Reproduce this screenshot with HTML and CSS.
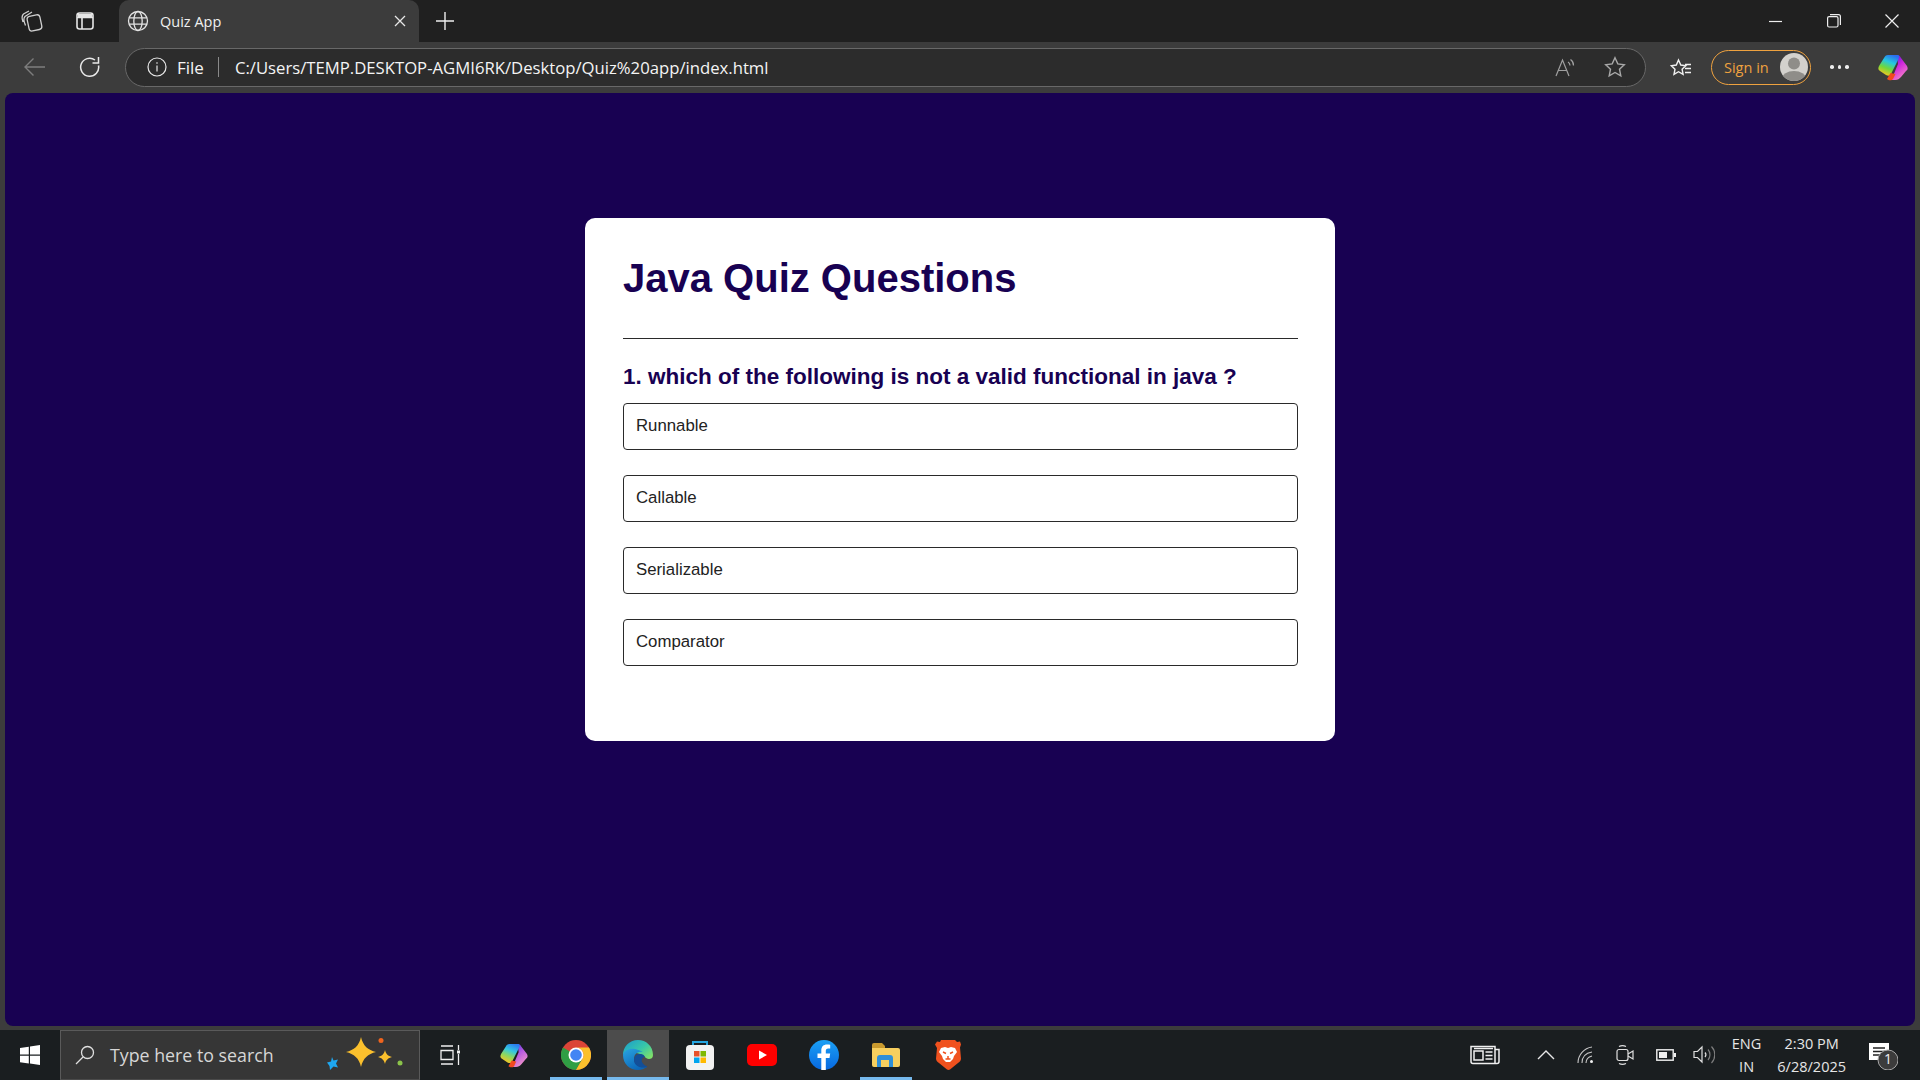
FILE: index.html
```html
<!DOCTYPE html>
<html lang="en">
<head>
<meta charset="utf-8">
<title>Quiz App</title>
<link rel="stylesheet" href="styles.css">
</head>
<body>
<div class="screen">
  <header class="tabstrip">
    <div class="strip-btn first"><svg width="24" height="24" viewBox="0 0 24 24" fill="none" stroke="#cfcfcf" stroke-width="1.3"><rect x="8" y="6.5" width="13" height="15" rx="3" transform="rotate(-12 14 14)"/><path d="M5.5 16.500C3.500 12 3.500 9 5 7.500L12 3M3 13C1.500 9 2 6.500 3.500 5L9 2"/></svg></div>
    <div class="strip-btn second"><svg width="20" height="20" viewBox="0 0 20 20" fill="none" stroke="#e6e6e6" stroke-width="1.6"><rect x="2" y="2" width="16" height="16" rx="2.5"/><path d="M2 6.5h16M7 6.5V18" /><path d="M3 3h14v3H3z" fill="#e6e6e6" stroke="none"/></svg></div>
    <div class="tab">
      <svg class="tab-globe" width="22" height="22" viewBox="0 0 22 22" fill="none" stroke="#e4e4e4" stroke-width="1.3"><circle cx="11" cy="11" r="9.5"/><ellipse cx="11" cy="11" rx="4.2" ry="9.5"/><path d="M2 7.8h18M2 14.2h18"/></svg>
      <span class="tab-title">Quiz App</span>
      <svg class="tab-close" width="12" height="12" viewBox="0 0 12 12" stroke="#e8e8e8" stroke-width="1.3"><path d="M1 1l10 10M11 1L1 11"/></svg>
    </div>
    <svg class="new-tab" width="18" height="18" viewBox="0 0 18 18" stroke="#eee" stroke-width="1.4"><path d="M9 0v18M0 9h18"/></svg>
    <div class="window-controls">
      <svg width="14" height="14" viewBox="0 0 14 14" stroke="#eee" stroke-width="1.2"><path d="M0 7.500h13"/></svg>
      <svg width="14" height="14" viewBox="0 0 14 14" fill="none" stroke="#eee" stroke-width="1.2"><rect x=".6" y="2.6" width="10.4" height="10.4" rx="1.5"/><path d="M3 .6h8.500a1.900 1.900 0 0 1 1.900 1.900V11"/></svg>
      <svg width="14" height="14" viewBox="0 0 14 14" stroke="#eee" stroke-width="1.2"><path d="M.5.5l13 13M13.500.5l-13 13"/></svg>
    </div>
  </header>

  <nav class="toolbar">
    <svg class="back" width="22" height="20" viewBox="0 0 22 20" fill="none" stroke="#7d7d7d" stroke-width="1.4"><path d="M21 10H1M9.500 1.500L1 10l8.500 8.500"/></svg>
    <svg class="reload" width="22" height="22" viewBox="0 0 22 22" fill="none" stroke="#e8e8e8" stroke-width="1.5"><path d="M19.500 9.500A9 9 0 1 1 16 4"/><path d="M19.500 1v6h-6"/></svg>
    <div class="address">
      <svg class="info" width="20" height="20" viewBox="0 0 20 20" fill="none" stroke="#e8e8e8" stroke-width="1.2"><circle cx="10" cy="10" r="9"/><path d="M10 8.500v6M10 5.200v1.600"/></svg>
      <span class="file">File</span>
      <span class="sep"></span>
      <span class="url">C:/Users/TEMP.DESKTOP-AGMI6RK/Desktop/Quiz%20app/index.html</span>
      <svg class="read" width="20" height="20" viewBox="0 0 20 20" fill="none" stroke="#a0a0a0" stroke-width="1.2"><path d="M1 19L7.500 3 14 19M3.500 13.500h8M13 5a4 4 0 0 1 2 3.500M15.500 2.500a7 7 0 0 1 3 6"/></svg>
      <svg class="fav" width="22" height="22" viewBox="0 0 22 22" fill="none" stroke="#a8a8a8" stroke-width="1.4"><path d="M11 1.800l2.800 6.100 6.500.8-4.800 4.500 1.300 6.600L11 16.500l-5.800 3.300 1.300-6.600L1.700 8.700l6.500-.8z"/></svg>
    </div>
    <svg class="favs" width="22" height="22" viewBox="0 0 22 22" fill="none" stroke="#f0f0f0" stroke-width="1.4"><path d="M8.500 2l2.300 5 5 .7-3.700 3.500 1 5.200-4.600-2.700-4.500 2.700 1-5.200L1.300 7.700l5-.7z" transform="translate(0 2)"/><path d="M15 8.500H21M15 12.500H21M15 16.500H21"/></svg>
    <div class="signin">
      <span>Sign in</span>
      <svg width="28" height="28" viewBox="0 0 28 28"><defs><clipPath id="av"><circle cx="14" cy="14" r="14"/></clipPath></defs><circle cx="14" cy="14" r="14" fill="#d3d1cd"/><g clip-path="url(#av)" fill="#8f8d89"><circle cx="14" cy="10.500" r="6"/><ellipse cx="14" cy="26" rx="12" ry="8"/></g></svg>
    </div>
    <div class="dots"><i></i><i></i><i></i></div>
    <svg class="copilot" width="30" height="27" viewBox="0 0 30 27">
      <defs>
        <linearGradient id="cp1" x1=".7" y1="0" x2=".3" y2="1"><stop offset="0" stop-color="#2b6df0"/><stop offset=".35" stop-color="#25c8e0"/><stop offset=".65" stop-color="#6fd83c"/><stop offset="1" stop-color="#ffc21e"/></linearGradient>
        <linearGradient id="cp2" x1=".2" y1="0" x2=".8" y2="1"><stop offset="0" stop-color="#4a14e0"/><stop offset=".45" stop-color="#d026dc"/><stop offset="1" stop-color="#fb8fc4"/></linearGradient>
      </defs>
      <path d="M19 1c2 0 3 1 4 3l6 8c1 2 1 4-1 5l-5 6c-2 2-3 3-6 3h-6c2-1 3-2 4-4l5-12z" fill="url(#cp2)"/>
      <path d="M10 1h9c2.500 0 2.500 2 1.500 4L13 20c-1 2-3 2-5 1l-6-4c-2-1-2-3-1-5L6 4c1-2 2-3 4-3z" fill="url(#cp1)"/>
      <path d="M12.500 19l5 1-2.500 5c-1 1.500-3 1.500-4.500 1L9 25z" fill="#f2491f"/>
    </svg>
  </nav>

  <main class="viewport">
    <section class="card">
      <h1 class="quiz-title">Java Quiz Questions</h1>
      <hr class="rule">
      <h2 class="question">1. which of the following is not a valid functional in java ?</h2>
      <ul class="options">
        <li class="option">Runnable</li>
        <li class="option">Callable</li>
        <li class="option">Serializable</li>
        <li class="option">Comparator</li>
      </ul>
    </section>
  </main>

  <footer class="taskbar">
    <div class="start"><svg width="20" height="20" viewBox="0 0 20 20" fill="#fff"><path d="M0 3l8.800-1.300v7.800H0zM10 1.500L20 0v9.500H10zM0 10.700h8.800v7.800L0 17.200zM10 10.700h10V20l-10-1.500z"/></svg></div>
    <div class="search">
      <svg class="search-icon" width="20" height="20" viewBox="0 0 20 20" fill="none" stroke="#e0e0e0" stroke-width="1.3"><circle cx="12.500" cy="7.500" r="6"/><path d="M8 12L1 19"/></svg>
      <span class="search-text">Type here to search</span>
      <svg class="sparkle" width="78" height="36" viewBox="0 0 78 36">
        <path d="M34 0c2 9 7 13 15 15-8 2-13 6-15 15-2-9-7-13-15-15 8-2 13-6 15-15z" fill="#fbc02d"/>
        <path d="M5 20l1.500 3.500 4.500-1-2 4 2 4-4.500-1L3 33l-.5-4L0 25.500l4-1z" fill="#1ea7f0"/>
        <path d="M58 13c1 4 3 6 7 7-4 1-6 3-7 7-1-4-3-6-7-7 4-1 6-3 7-7z" fill="#fbc02d"/>
        <circle cx="54" cy="3.500" r="2.500" fill="#f0641e"/><circle cx="73" cy="26" r="2.500" fill="#8bc34a"/>
      </svg>
    </div>
    <div class="task-view"><svg width="20" height="20" viewBox="0 0 20 20" fill="none" stroke="#f0f0f0" stroke-width="1.300"><path d="M1 1h12M1 19h12M1 5.500h12v9H1zM18.500 0v5M18.500 9v11"/><rect x="17" y="5.500" width="3" height="3" fill="#f0f0f0" stroke="none"/></svg></div>
    <div class="app"><svg width="28" height="25" viewBox="0 0 30 27">
      <defs>
        <linearGradient id="cp3" x1=".7" y1="0" x2=".3" y2="1"><stop offset="0" stop-color="#2b7df0"/><stop offset=".35" stop-color="#35c8e0"/><stop offset=".65" stop-color="#8fd85c"/><stop offset="1" stop-color="#ffc21e"/></linearGradient>
        <linearGradient id="cp4" x1=".2" y1="0" x2=".8" y2="1"><stop offset="0" stop-color="#4a34e0"/><stop offset=".45" stop-color="#b85be0"/><stop offset="1" stop-color="#fb9fc4"/></linearGradient>
      </defs>
      <path d="M19 1c2 0 3 1 4 3l6 8c1 2 1 4-1 5l-5 6c-2 2-3 3-6 3h-6c2-1 3-2 4-4l5-12z" fill="url(#cp4)"/>
      <path d="M10 1h9c2.500 0 2.500 2 1.500 4L13 20c-1 2-3 2-5 1l-6-4c-2-1-2-3-1-5L6 4c1-2 2-3 4-3z" fill="url(#cp3)"/>
      <path d="M12.500 19l5 1-2.500 5c-1 1.500-3 1.500-4.500 1L9 25z" fill="#f2491f"/>
    </svg></div>
    <div class="app running"><svg width="30" height="30" viewBox="0 0 30 30">
      <circle cx="15" cy="15" r="15" fill="#db4437"/>
      <path d="M15 15L2 7.500A15 15 0 0 0 15 30l6.500-11.300z" fill="#2f9e44"/>
      <path d="M15 7.500h13A15 15 0 0 1 15 30l6.500-11.300A7.500 7.500 0 0 0 15 7.500z" fill="#fbc02d"/>
      <circle cx="15" cy="15" r="7.500" fill="#fff"/><circle cx="15" cy="15" r="5.800" fill="#4285f4"/>
    </svg></div>
    <div class="app active"><svg width="30" height="30" viewBox="0 0 30 30">
      <defs>
        <linearGradient id="ed1" x1="0" y1="0" x2="1" y2=".8"><stop offset="0" stop-color="#1a9ad0"/><stop offset=".6" stop-color="#38c8a8"/><stop offset="1" stop-color="#7fe06a"/></linearGradient>
        <linearGradient id="ed2" x1="0" y1="0" x2=".6" y2="1"><stop offset="0" stop-color="#2aa4e0"/><stop offset="1" stop-color="#0b66b8"/></linearGradient>
      </defs>
      <path d="M15 0C23 0 30 6 30 15c0 3-2 4-4 4-4 0-4-4-9-5C10 12 2 11 0 15 0 7 6 0 15 0z" fill="url(#ed1)"/>
      <path d="M0 15c1-5 7-7 12-6 5 1 8 3 8 3-4-1-9 1-9 7 0 5 5 9 13 8-3 2-6 3-9 3C7 30 0 24 0 15z" fill="url(#ed2)"/>
      <path d="M24 27c-6 2-13-1-13-7 0-3 2-6 6-6 3 0 4 1 5 3-2 0-4 2-3 5 1 2 3 4 5 4z" fill="#134f99"/>
    </svg></div>
    <div class="app"><svg width="30" height="30" viewBox="0 0 30 30">
      <path d="M8 7V2h14v5" fill="none" stroke="#25a5e0" stroke-width="2"/>
      <rect x="1" y="5" width="28" height="25" rx="4" fill="#f2f2f2"/>
      <rect x="9" y="11" width="5.500" height="5.500" fill="#e8502a"/><rect x="15.500" y="11" width="5.500" height="5.500" fill="#7fb900"/>
      <rect x="9" y="17.500" width="5.500" height="5.500" fill="#00a4ef"/><rect x="15.500" y="17.500" width="5.500" height="5.500" fill="#ffb900"/>
    </svg></div>
    <div class="app"><svg width="30" height="22" viewBox="0 0 30 22"><rect width="30" height="22" rx="5" fill="#f00"/><path d="M12 6.500l8 4.500-8 4.500z" fill="#fff"/></svg></div>
    <div class="app"><svg width="30" height="30" viewBox="0 0 30 30"><defs><linearGradient id="fb" x1="0" y1="0" x2="0" y2="1"><stop offset="0" stop-color="#1ba0f5"/><stop offset="1" stop-color="#0768e0"/></linearGradient></defs><circle cx="15" cy="15" r="15" fill="url(#fb)"/><path d="M16.800 30V18h3.700l.7-4.500h-4.400v-2.700c0-1.300.6-2.300 2.400-2.300h2V4.700c-1-.2-2.100-.3-3.200-.3-3.500 0-5.700 2.100-5.700 5.900v3.200H8.500V18h3.800v12z" fill="#fff"/></svg></div>
    <div class="app running"><svg width="28" height="24" viewBox="0 0 28 24"><path d="M0 2a2 2 0 0 1 2-2h8l3 3h0v4H0z" fill="#c99a2e"/><path d="M0 5h26a2 2 0 0 1 2 2v15a2 2 0 0 1-2 2H2a2 2 0 0 1-2-2z" fill="#f7cf5e"/><path d="M5 24v-9a3 3 0 0 1 3-3h10a3 3 0 0 1 3 3v9h-4v-7H9v7z" fill="#2f8fd8"/></svg></div>
    <div class="app"><svg width="26" height="30" viewBox="0 0 26 30"><path d="M6 0h14l2 2 3-.5 1 3-1 3 1 11c0 2-1 3-3 4.500l-8 6.500c-1 .6-2 .6-3 0l-8-6.500C2 21.500 1 20.500 1 18.500L2 8 0 4.500l2-3 3 .5z" fill="#f0511e"/><path d="M6 8l4-1 3 1 3-1 4 1 2 4-3 4-1 3-3 3h-4l-3-3-1-3-3-4z" fill="#fff"/><path d="M8 12l3 1.500M18 12l-3 1.500M13 16v3M10.500 19h5" stroke="#f0511e" stroke-width="1.500" fill="none"/></svg></div>

    <div class="tray">
      <svg class="news" width="30" height="20" viewBox="0 0 30 20" fill="none" stroke="#f0f0f0" stroke-width="1.500"><path d="M1 1.500h24v17H3a2 2 0 0 1-2-2zM25 4.500h4v12a2 2 0 0 1-2 2h-2"/><rect x="4" y="6" width="9" height="9"/><path d="M4 3.500h19M15.500 7h7M15.500 10.500h7M15.500 14h7"/></svg>
      <svg class="caret" width="18" height="10" viewBox="0 0 18 10" fill="none" stroke="#e8e8e8" stroke-width="1.400"><path d="M1 9l8-8 8 8"/></svg>
      <svg class="wifi" width="18" height="18" viewBox="0 0 18 18" fill="none" stroke="#c8c8c8" stroke-width="1.100"><path d="M1 17C1 9 7 2 15 1M5 17c0-6 4-10 10-11M9 17c0-3 2-6 6-7"/><circle cx="14.500" cy="15.500" r="1.500" fill="#f0f0f0" stroke="none"/></svg>
      <svg class="meet" width="18" height="20" viewBox="0 0 18 20" fill="none" stroke="#e0e0e0" stroke-width="1.200"><rect x="1" y="4.500" width="11" height="11" rx="2"/><path d="M12 9l5-3v8l-5-3M3 1.500c2-1 5-1 7 0M3 18.500c2 1 5 1 7 0"/></svg>
      <svg class="battery" width="20" height="12" viewBox="0 0 20 12"><rect x=".8" y=".8" width="16.400" height="10.400" fill="none" stroke="#f0f0f0" stroke-width="1.400"/><rect x="3" y="3" width="8" height="6" fill="#f0f0f0"/><rect x="18" y="4" width="2" height="4" fill="#f0f0f0"/></svg>
      <svg class="volume" width="22" height="20" viewBox="0 0 22 20" fill="none" stroke="#e0e0e0" stroke-width="1.200"><path d="M1 6.500h3.500L9 2v15l-4.500-4.500H1z"/><path d="M12 7.500a3.500 3.500 0 0 1 0 4.500" /><path d="M15 4.500a8 8 0 0 1 0 10.500M18.500 1.500a12 12 0 0 1 0 16.500" stroke="#7d7d7d"/></svg>
      <div class="lang"><span>ENG</span><span>IN</span></div>
      <div class="clock"><span>2:30 PM</span><span>6/28/2025</span></div>
      <div class="notif">
        <svg width="30" height="30" viewBox="0 0 30 30"><rect x="1" y="3" width="20" height="17" fill="#fff"/><path d="M5 8h12M5 11.500h12M5 15h9" stroke="#222" stroke-width="1.300"/><circle cx="20" cy="20" r="10" fill="#3c3c3c" stroke="#a8a8a8" stroke-width="1"/></svg>
        <span class="badge">1</span>
      </div>
    </div>
  </footer>
</div>
</body>
</html>
```

FILE: styles.css
```css
* { box-sizing: border-box; }
html, body { margin: 0; height: 100%; }
body { overflow: hidden; background: #3c3c3c; }
.screen { width: 1920px; height: 1080px; display: flex; flex-direction: column; font-family: "Open Sans", "Noto Sans", sans-serif; color: #fff; }

.tabstrip { height: 42px; background: #202020; display: flex; align-items: center; position: relative; flex: none; }
.strip-btn { display: flex; align-items: center; justify-content: center; }
.strip-btn.first { width: 24px; margin-left: 20px; }
.strip-btn.second { width: 20px; margin-left: 31px; }
.tab { width: 300px; height: 42px; margin-left: 24px; background: #3c3c3c; border-radius: 10px 10px 0 0; display: flex; align-items: center; padding: 0 13px 0 8px; }
.tab-globe { flex: none; }
.tab-title { margin-left: 11px; font-size: 14.500px; color: #f0f0f0; flex: 1; }
.tab-close { flex: none; }
.new-tab { margin-left: 17px; flex: none; }
.window-controls { margin-left: auto; display: flex; gap: 44px; padding-right: 21px; align-items: center; width: 170px; justify-content: flex-end; }

.toolbar { height: 51px; background: #3c3c3c; display: flex; align-items: center; flex: none; padding-bottom: 1px; }
.back { margin-left: 24px; flex: none; }
.reload { margin-left: 33px; flex: none; }
.address { width: 1521px; height: 39px; margin-left: 24px; border: 1px solid #686868; border-radius: 20px; background: #2c2c2c; display: flex; align-items: center; padding-left: 21px; flex: none; }
.file { margin-left: 10px; font-size: 17px; color: #f4f4f4; }
.sep { width: 1px; height: 20px; background: #8a8a8a; margin-left: 14px; }
.url { margin-left: 16px; font-size: 16.700px; color: #f4f4f4; white-space: nowrap; flex: 1; }
.read { flex: none; }
.fav { margin-left: 29px; margin-right: 19px; flex: none; }
.favs { margin-left: 24px; flex: none; }
.signin { width: 100px; height: 35px; margin-left: 19px; border: 1.500px solid #efa23f; border-radius: 18px; display: flex; align-items: center; justify-content: space-between; padding: 0 2px 0 12px; color: #efa23f; font-size: 14.500px; flex: none; }
.dots { display: flex; gap: 4px; margin-left: 19px; flex: none; }
.dots i { width: 3.500px; height: 3.500px; border-radius: 50%; background: #eee; }
.copilot { margin-left: 29px; flex: none; }

.viewport { flex: 1; margin: 0 5px; background: #180152; border-radius: 8px; display: flex; justify-content: center; align-items: flex-start; padding-top: 125px; min-height: 0; }
.card { width: 750px; height: 523px; background: #fff; border-radius: 10px; padding: 37px 37px 38px 38px; font-family: "Liberation Sans", Arial, sans-serif; }
.quiz-title { margin: 0; font-size: 40px; line-height: 46px; color: #180152; font-weight: 700; }
.rule { margin: 37px 0 0; height: 1px; border: 0; background: #2a2a2a; }
.question { margin: 24px 0 0; font-size: 22.500px; line-height: 28px; color: #180152; font-weight: 700; }
.options { list-style: none; margin: 12px 0 0; padding: 0; display: flex; flex-direction: column; gap: 25px; }
.option { height: 47px; border: 1px solid #2a2a2a; border-radius: 4px; padding: 0 12px 2px; display: flex; align-items: center; font-size: 16.800px; color: #222; }

.taskbar { height: 50px; margin-top: 4px; background: #1a1e20; display: flex; align-items: stretch; flex: none; position: relative; }
.start { width: 60px; display: flex; align-items: center; justify-content: center; }
.search { width: 360px; background: #363636; border: 1px solid #5a5a5a; border-bottom-color: #4a4a4a; display: flex; align-items: center; padding-left: 14px; }
.search-icon { flex: none; }
.search-text { margin-left: 15px; font-size: 17.800px; color: #d6d6d6; flex: 1; white-space: nowrap; }
.sparkle { flex: none; margin-right: 14px; }
.task-view { width: 60px; display: flex; align-items: center; justify-content: center; margin-right: 3px; }
.app { width: 62px; display: flex; align-items: center; justify-content: center; position: relative; }
.app::after { content: ""; position: absolute; bottom: 0; height: 3px; left: 5px; right: 5px; }
.app.running::after { background: #76b9ed; }
.app.active { background: #4c4c4c; }
.app.active::after { background: #76b9ed; left: 0; right: 0; }
.tray { margin-left: auto; display: flex; align-items: center; }
.news { margin-right: 37px; }
.caret { margin-right: 22px; }
.wifi { margin-right: 21px; }
.meet { margin-right: 22px; }
.battery { margin-right: 17px; }
.volume { margin-right: 17px; }
.lang, .clock { display: flex; flex-direction: column; align-items: center; font-size: 14.500px; line-height: 23px; color: #e6e6e6; }
.clock { margin-left: 16px; }
.notif { position: relative; width: 30px; height: 30px; margin-left: 22px; margin-right: 22px; }
.badge { position: absolute; left: 15px; top: 9px; width: 10px; text-align: center; font-size: 14px; line-height: 20px; color: #eee; }
```
